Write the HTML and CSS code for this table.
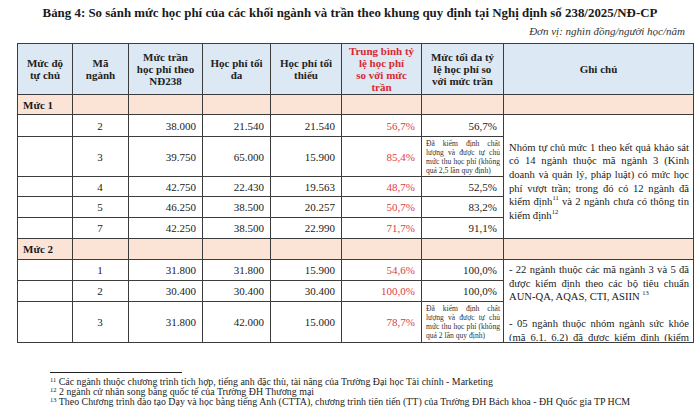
FILE: index.html
```html
<!DOCTYPE html>
<html lang="vi">
<head>
<meta charset="utf-8">
<title>Bảng 4</title>
<link rel="stylesheet" href="styles.css">
</head>
<body>
<div class="page">
  <h1 class="title">Bảng 4: So sánh mức học phí của các khối ngành và trần theo khung quy định tại Nghị định số 238/2025/NĐ-CP</h1>
  <div class="unit">Đơn vị: nghìn đồng/người học/năm</div>
  <table class="fees">
    <colgroup>
      <col class="c1"><col class="c2"><col class="c3"><col class="c4"><col class="c5"><col class="c6"><col class="c7"><col class="c8">
    </colgroup>
    <thead>
      <tr class="head">
        <th>Mức độ<br>tự chủ</th>
        <th>Mã<br>ngành</th>
        <th>Mức trần<br>học phí theo<br>NĐ238</th>
        <th>Học phí tối<br>đa</th>
        <th>Học phí tối<br>thiểu</th>
        <th class="red">Trung bình tỷ<br>lệ học phí<br>so với mức<br>trần</th>
        <th>Mức tối đa tỷ<br>lệ học phí so<br>với mức trần</th>
        <th>Ghi chú</th>
      </tr>
    </thead>
    <tbody>
      <tr class="group h20">
        <td class="gname">Mức 1</td><td></td><td></td><td></td><td></td><td></td><td></td><td></td>
      </tr>
      <tr class="h22">
        <td></td><td class="ctr">2</td><td class="num">38.000</td><td class="num">21.540</td><td class="num">21.540</td><td class="num pct">56,7%</td><td class="num">56,7%</td>
        <td rowspan="5" class="note note1">Nhóm tự chủ mức 1 theo kết quả khảo sát có 14 ngành thuộc mã ngành 3 (Kinh doanh và quản lý, pháp luật) có mức học phí vượt trần; trong đó có 12 ngành đã kiểm định<sup>11</sup> và 2 ngành chưa có thông tin kiểm định<sup>12</sup></td>
      </tr>
      <tr class="h40">
        <td></td><td class="ctr">3</td><td class="num">39.750</td><td class="num">65.000</td><td class="num">15.900</td><td class="num pct">85,4%</td>
        <td class="tiny">Đã kiểm định chất lượng và được tự chủ mức thu học phí (không quá 2,5 lần quy định)</td>
      </tr>
      <tr class="h20">
        <td></td><td class="ctr">4</td><td class="num">42.750</td><td class="num">22.430</td><td class="num">19.563</td><td class="num pct">48,7%</td><td class="num">52,5%</td>
      </tr>
      <tr class="h21">
        <td></td><td class="ctr">5</td><td class="num">46.250</td><td class="num">38.500</td><td class="num">20.257</td><td class="num pct">50,7%</td><td class="num">83,2%</td>
      </tr>
      <tr class="h21">
        <td></td><td class="ctr">7</td><td class="num">42.250</td><td class="num">38.500</td><td class="num">22.990</td><td class="num pct">71,7%</td><td class="num">91,1%</td>
      </tr>
      <tr class="group h21">
        <td class="gname">Mức 2</td><td></td><td></td><td></td><td></td><td></td><td></td><td></td>
      </tr>
      <tr class="h21">
        <td></td><td class="ctr">1</td><td class="num">31.800</td><td class="num">31.800</td><td class="num">15.900</td><td class="num pct">54,6%</td><td class="num">100,0%</td>
        <td rowspan="3" class="note note2"><div class="clip">
          <p>- 22 ngành thuộc các mã ngành 3 và 5 đã được kiểm định theo các bộ tiêu chuẩn AUN-QA, AQAS, CTI, ASIIN <sup>13</sup></p>
          <p>- 05 ngành thuộc nhóm ngành sức khỏe (mã 6.1, 6.2) đã được kiểm định (kiểm định chất lượng chương trình đào tạo)</p>
        </div></td>
      </tr>
      <tr class="h21">
        <td></td><td class="ctr">2</td><td class="num">30.400</td><td class="num">30.400</td><td class="num">30.400</td><td class="num pct">100,0%</td><td class="num">100,0%</td>
      </tr>
      <tr class="h41">
        <td></td><td class="ctr">3</td><td class="num">31.800</td><td class="num">42.000</td><td class="num">15.000</td><td class="num pct">78,7%</td>
        <td class="tiny">Đã kiểm định chất lượng và được tự chủ mức thu học phí (không quá 2 lần quy định)</td>
      </tr>
    </tbody>
  </table>
  <div class="footnotes">
    <div class="rule"></div>
    <p><sup>11</sup> Các ngành thuộc chương trình tích hợp, tiếng anh đặc thù, tài năng của Trường Đại học Tài chính - Marketing</p>
    <p><sup>12</sup> 2 ngành cử nhân song bằng quốc tế của Trường ĐH Thương mại</p>
    <p><sup>13</sup> Theo Chương trình đào tạo Dạy và học bằng tiếng Anh (CTTA), chương trình tiên tiến (TT) của Trường ĐH Bách khoa - ĐH Quốc gia TP HCM</p>
  </div>
</div>
</body>
</html>
```

FILE: styles.css
```css
html, body {
  margin: 0;
  padding: 0;
  background: #ffffff;
}

.page {
  width: 700px;
  height: 420px;
  overflow: hidden;
  font-family: "Liberation Serif", "Times New Roman", "DejaVu Serif", serif;
  color: #1a1a1a;
}

.title {
  margin: 0;
  padding-top: 4px;
  font-size: 12.9px;
  line-height: 18px;
  font-weight: bold;
  text-align: center;
  color: #1a1a1a;
}

.unit {
  margin-top: 2px;
  padding-right: 15px;
  font-size: 11px;
  line-height: 14px;
  font-style: italic;
  text-align: right;
  color: #333;
}

.fees {
  margin: 5px 0 0 17px;
  width: 676px;
  table-layout: fixed;
  border-collapse: collapse;
  font-size: 11px;
  line-height: 12px;
}

.c1 { width: 55px; }
.c2 { width: 56px; }
.c3 { width: 74px; }
.c4 { width: 68px; }
.c5 { width: 71px; }
.c6 { width: 80px; }
.c7 { width: 82px; }
.c8 { width: 190px; }

.fees th,
.fees td {
  border: 1px solid #3c3c3c;
  padding: 0 6px 0 5px;
  vertical-align: middle;
}

.fees th {
  background: #dce8f4;
  font-weight: bold;
  text-align: center;
  height: 50px;
  padding: 0 2px;
  color: #222;
}

.fees th.red {
  color: #d92a30;
}

.group td {
  background: #fbe3d6;
}

.gname {
  font-weight: bold;
}

.h20 td { height: 19px; }
.h21 td { height: 20px; }
.h22 td { height: 21px; }
.h40 td { height: 39px; }
.h41 td { height: 40px; }

.ctr {
  text-align: center;
}

.num {
  text-align: right;
}

.pct {
  color: #dc3c44;
}

.fees td.tiny {
  font-size: 7.6px;
  line-height: 9px;
  text-align: justify;
  text-align-last: left;
  padding: 0 3px 0 4px;
  color: #333;
}

.fees td.note {
  font-size: 10.6px;
  line-height: 13.6px;
  text-align: justify;
  padding: 10px 4px 0 5px;
  color: #1a1a1a;
}

.note sup {
  font-size: 6.5px;
  line-height: 0;
  vertical-align: 5px;
}

.fees td.note2 {
  vertical-align: top;
  padding-top: 0;
}

.clip {
  height: 81px;
  overflow: hidden;
  padding-top: 3px;
  box-sizing: border-box;
}

.clip p {
  margin: 0 0 13.6px 0;
}

.footnotes {
  margin-top: 29px;
  padding-left: 50px;
}

.rule {
  width: 132px;
  height: 1px;
  background: #222;
  margin-bottom: 4px;
}

.footnotes p {
  margin: 0;
  font-size: 9.9px;
  line-height: 10px;
  white-space: nowrap;
  color: #222;
}

.footnotes sup {
  font-size: 6.5px;
  line-height: 0;
  vertical-align: 3px;
}
```
